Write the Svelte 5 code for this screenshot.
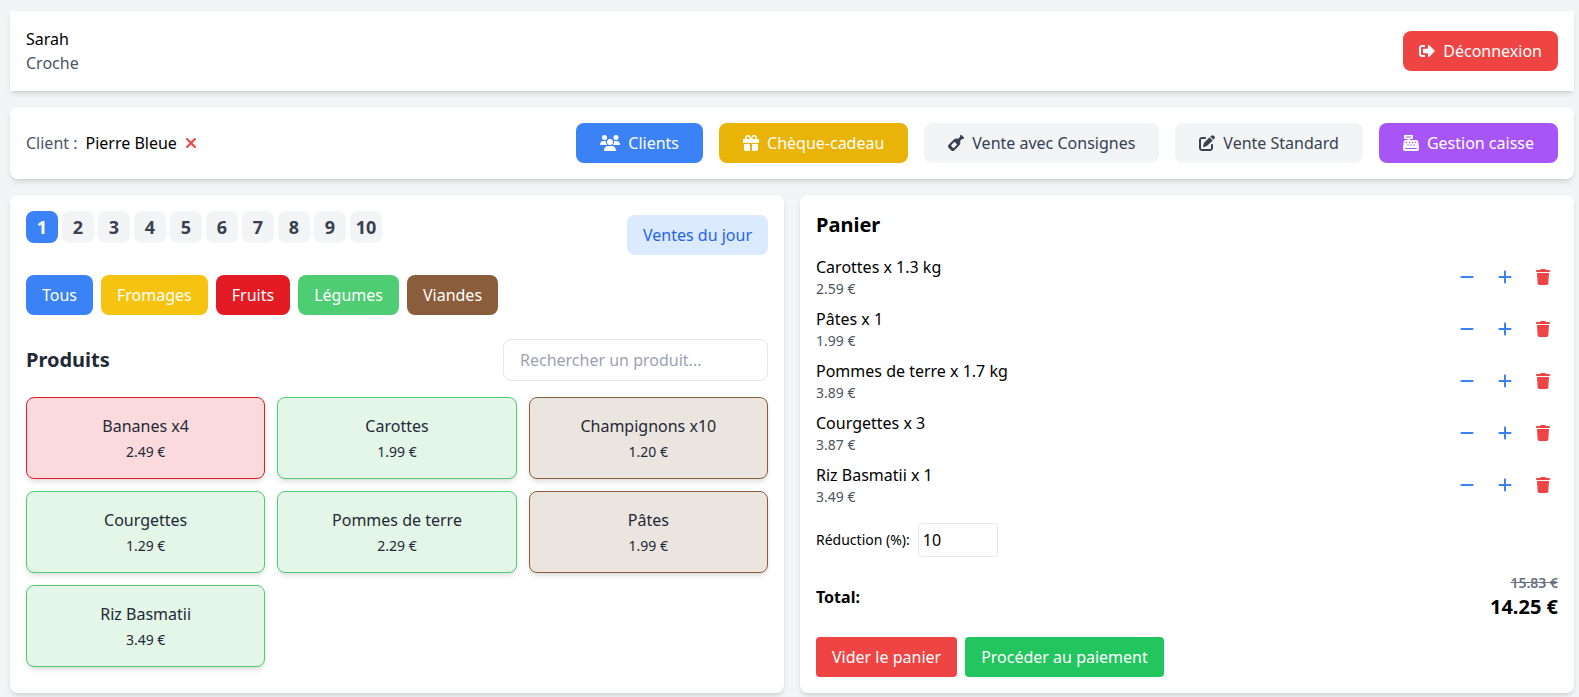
<script>
  const icons = {
    out: [512, 'M497 273L329 441c-15 15-41 4.500-41-17v-96H152c-13.300 0-24-10.700-24-24v-96c0-13.300 10.700-24 24-24h136V88c0-21.400 25.900-32 41-17l168 168c9.300 9.400 9.300 24.600 0 34zM192 436v-40c0-6.600-5.400-12-12-12H96c-17.700 0-32-14.300-32-32V160c0-17.700 14.300-32 32-32h84c6.600 0 12-5.400 12-12V76c0-6.600-5.400-12-12-12H96c-53 0-96 43-96 96v192c0 53 43 96 96 96h84c6.600 0 12-5.400 12-12z'],
    users: [640, 'M144 0a80 80 0 1 1 0 160A80 80 0 1 1 144 0zM512 0a80 80 0 1 1 0 160A80 80 0 1 1 512 0zM0 298.700C0 239.800 47.800 192 106.700 192h42.700c15.900 0 31 3.500 44.600 9.700c-1.300 7.200-1.900 14.700-1.900 22.300c0 38.200 16.800 72.500 43.300 96c-.2 0-.4 0-.7 0H21.300C9.600 320 0 310.400 0 298.700zM405.300 320c-.2 0-.4 0-.7 0c26.600-23.500 43.300-57.800 43.300-96c0-7.600-.7-15-1.900-22.300c13.600-6.300 28.700-9.700 44.600-9.700h42.700C592.200 192 640 239.800 640 298.700c0 11.800-9.600 21.300-21.300 21.300H405.300zM224 224a96 96 0 1 1 192 0 96 96 0 1 1 -192 0zM128 485.300C128 411.700 187.700 352 261.300 352H378.700C452.300 352 512 411.700 512 485.300c0 14.700-11.900 26.700-26.700 26.700H154.700c-14.700 0-26.700-11.900-26.700-26.700z'],
    gift: [512, 'M190.500 68.800L225.300 128H224 152c-22.100 0-40-17.900-40-40s17.900-40 40-40h2.200c14.900 0 28.800 7.900 36.300 20.800zM64 88c0 14.400 3.500 28 9.600 40H32c-17.700 0-32 14.300-32 32v64c0 17.700 14.300 32 32 32H480c17.700 0 32-14.300 32-32V160c0-17.700-14.300-32-32-32H438.400c6.100-12 9.600-25.600 9.600-40c0-48.600-39.400-88-88-88h-2.200c-31.900 0-61.500 16.900-77.700 44.400L256 85.500l-24.100-41C215.700 16.900 186.100 0 154.200 0H152C103.400 0 64 39.400 64 88zm336 0c0 22.100-17.900 40-40 40H288h-1.300l34.800-59.200C329.100 55.900 342.900 48 357.800 48H360c22.100 0 40 17.900 40 40zM32 288V464c0 26.500 21.500 48 48 48H224V288H32zM288 512H432c26.500 0 48-21.500 48-48V288H288V512z'],
    bottle: [512, 'M393.400 9.400c12.500-12.500 32.800-12.500 45.300 0l64 64c12.500 12.500 12.500 32.800 0 45.300c-11.800 11.800-30.700 12.500-43.200 1.900l-9.500 9.500-48.800 48.800c-9.200 9.200-11.500 22.900-8.600 35.600c9.400 40.900-1.900 85.600-33.800 117.500L197.300 493.300c-25 25-65.500 25-90.500 0L18.700 405.200c-25-25-25-65.500 0-90.500L181.200 152.200c31.900-31.900 76.600-43.100 117.500-33.800c12.600 2.900 26.400 .5 35.500-8.600l48.800-48.800 9.500-9.500c-10.600-12.600-10-31.400 1.900-43.200zM99.300 347.300l65.400 65.400c6.200 6.200 16.400 6.200 22.600 0l97.400-97.400c6.200-6.200 6.200-16.400 0-22.600l-65.400-65.400c-6.200-6.200-16.400-6.200-22.600 0L99.300 324.700c-6.200 6.200-6.200 16.400 0 22.600z'],
    pen: [512, 'M471.600 21.700c-21.900-21.900-57.300-21.900-79.200 0L362.300 51.700l97.900 97.900 30.100-30.100c21.900-21.900 21.900-57.300 0-79.200L471.600 21.700zm-299.200 220c-6.100 6.100-10.800 13.600-13.500 21.900l-29.600 88.800c-2.900 8.600-.6 18.100 5.800 24.600s15.900 8.700 24.600 5.800l88.800-29.600c8.200-2.700 15.700-7.400 21.900-13.500L437.700 172.300 339.700 74.300 172.400 241.700zM96 64C43 64 0 107 0 160V416c0 53 43 96 96 96H352c53 0 96-43 96-96V320c0-17.700-14.300-32-32-32s-32 14.300-32 32v96c0 17.700-14.300 32-32 32H96c-17.700 0-32-14.300-32-32V160c0-17.700 14.300-32 32-32h96c17.700 0 32-14.300 32-32s-14.300-32-32-32H96z'],
    register: [512, 'M64 0C46.300 0 32 14.300 32 32V96c0 17.700 14.300 32 32 32h80v32H87c-31.600 0-58.500 23.100-63.300 54.400L1.100 364.100C.4 368.800 0 373.600 0 378.400V448c0 35.300 28.700 64 64 64H448c35.300 0 64-28.700 64-64V378.400c0-4.800-.4-9.600-1.100-14.400L488.200 214.400C483.500 183.100 456.600 160 425 160H208V128h80c17.700 0 32-14.300 32-32V32c0-17.700-14.300-32-32-32H64zM96 48H256c8.800 0 16 7.200 16 16s-7.200 16-16 16H96c-8.800 0-16-7.200-16-16s7.200-16 16-16zM64 432c0-8.800 7.200-16 16-16H432c8.800 0 16 7.200 16 16s-7.200 16-16 16H80c-8.800 0-16-7.200-16-16zm48-168a24 24 0 1 1 0-48 24 24 0 1 1 0 48zm120-24a24 24 0 1 1 -48 0 24 24 0 1 1 48 0zM160 344a24 24 0 1 1 0-48 24 24 0 1 1 0 48zM328 240a24 24 0 1 1 -48 0 24 24 0 1 1 48 0zM256 344a24 24 0 1 1 0-48 24 24 0 1 1 0 48zM424 240a24 24 0 1 1 -48 0 24 24 0 1 1 48 0zM352 344a24 24 0 1 1 0-48 24 24 0 1 1 0 48z'],
    xmark: [384, 'M342.600 150.600c12.500-12.500 12.500-32.800 0-45.300s-32.800-12.500-45.300 0L192 210.700 86.600 105.400c-12.500-12.500-32.800-12.500-45.300 0s-12.500 32.800 0 45.300L146.700 256 41.400 361.400c-12.500 12.500-12.500 32.800 0 45.300s32.800 12.500 45.300 0L192 301.300 297.400 406.600c12.500 12.500 32.800 12.500 45.300 0s12.500-32.800 0-45.300L237.300 256 342.600 150.600z'],
    minus: [448, 'M432 256c0 17.700-14.300 32-32 32L48 288c-17.700 0-32-14.300-32-32s14.300-32 32-32l352 0c17.700 0 32 14.300 32 32z'],
    plus: [448, 'M256 80c0-17.700-14.300-32-32-32s-32 14.300-32 32V224H48c-17.700 0-32 14.300-32 32s14.300 32 32 32H192V432c0 17.700 14.300 32 32 32s32-14.300 32-32V288H400c17.700 0 32-14.300 32-32s-14.300-32-32-32H256V80z'],
    trash: [448, 'M135.200 17.700L128 32H32C14.300 32 0 46.300 0 64S14.300 96 32 96H416c17.700 0 32-14.300 32-32s-14.300-32-32-32H320l-7.200-14.300C307.400 6.800 296.300 0 284.200 0H163.800c-12.100 0-23.200 6.800-28.600 17.700zM416 128H32L53.200 467c1.600 25.300 22.600 45 47.900 45H346.900c25.300 0 46.300-19.700 47.900-45L416 128z']
  };

  const actions = [
    { label: 'Clients', icon: 'users', cls: 'blue' },
    { label: 'Chèque-cadeau', icon: 'gift', cls: 'yellow' },
    { label: 'Vente avec Consignes', icon: 'bottle', cls: 'grey' },
    { label: 'Vente Standard', icon: 'pen', cls: 'grey' },
    { label: 'Gestion caisse', icon: 'register', cls: 'purple' }
  ];

  const pages = [1, 2, 3, 4, 5, 6, 7, 8, 9, 10];

  const categories = [
    { label: 'Tous', cls: 'blue' },
    { label: 'Fromages', cls: 'cheese' },
    { label: 'Fruits', cls: 'fruit' },
    { label: 'Légumes', cls: 'veg' },
    { label: 'Viandes', cls: 'meat' }
  ];

  const products = [
    { name: 'Bananes x4', price: '2.49 €', cls: 'fruit' },
    { name: 'Carottes', price: '1.99 €', cls: 'veg' },
    { name: 'Champignons x10', price: '1.20 €', cls: 'meat' },
    { name: 'Courgettes', price: '1.29 €', cls: 'veg' },
    { name: 'Pommes de terre', price: '2.29 €', cls: 'veg' },
    { name: 'Pâtes', price: '1.99 €', cls: 'meat' },
    { name: 'Riz Basmatii', price: '3.49 €', cls: 'veg' }
  ];

  const cart = [
    { name: 'Carottes x 1.3 kg', price: '2.59 €' },
    { name: 'Pâtes x 1', price: '1.99 €' },
    { name: 'Pommes de terre x 1.7 kg', price: '3.89 €' },
    { name: 'Courgettes x 3', price: '3.87 €' },
    { name: 'Riz Basmatii x 1', price: '3.49 €' }
  ];
</script>

{#snippet icon(name)}
  <svg class="icon" viewBox="0 0 {icons[name][0]} 512" style="width: {icons[name][0] / 32}px" aria-hidden="true">
    <path fill="currentColor" d={icons[name][1]} />
  </svg>
{/snippet}

<div class="page">
  <header class="user card">
    <div>
      <div class="first">Sarah</div>
      <div class="last">Croche</div>
    </div>
    <button class="btn logout">{@render icon('out')}Déconnexion</button>
  </header>

  <section class="toolbar card">
    <span class="client-label">Client :</span>
    <span class="client-name">Pierre Bleue</span>
    <span class="client-clear">{@render icon('xmark')}</span>
    <div class="actions">
      {#each actions as a}
        <button class="btn wide {a.cls}">{@render icon(a.icon)}{a.label}</button>
      {/each}
    </div>
  </section>

  <main class="columns">
    <section class="panel card">
      <div class="top-row">
        <div class="pages">
          {#each pages as p}
            <button class="page-btn" class:active={p === 1}>{p}</button>
          {/each}
        </div>
        <button class="btn today">Ventes du jour</button>
      </div>

      <div class="cats">
        {#each categories as c}
          <button class="btn {c.cls}">{c.label}</button>
        {/each}
      </div>

      <div class="prod-head">
        <h2>Produits</h2>
        <input class="search" type="text" placeholder="Rechercher un produit..." />
      </div>

      <div class="grid">
        {#each products as p}
          <div class="product {p.cls}">
            <div class="name">{p.name}</div>
            <div class="price">{p.price}</div>
          </div>
        {/each}
      </div>
    </section>

    <section class="panel card">
      <h2 class="cart-title">Panier</h2>
      <ul class="cart">
        {#each cart as item}
          <li>
            <div>
              <div class="item-name">{item.name}</div>
              <div class="item-price">{item.price}</div>
            </div>
            <div class="item-actions">
              <button class="tool">{@render icon('minus')}</button>
              <button class="tool">{@render icon('plus')}</button>
              <button class="tool del">{@render icon('trash')}</button>
            </div>
          </li>
        {/each}
      </ul>

      <div class="discount">
        <label for="reduction">Réduction (%):</label>
        <input id="reduction" type="text" value="10" />
      </div>

      <div class="total">
        <span class="total-label">Total:</span>
        <div class="amounts">
          <div class="old">15.83 €</div>
          <div class="new">14.25 €</div>
        </div>
      </div>

      <div class="cart-buttons">
        <button class="btn small-r clear">Vider le panier</button>
        <button class="btn small-r pay">Procéder au paiement</button>
      </div>
    </section>
  </main>
</div>

<style>
  :global(body) {
    background: #f3f4f6;
    overflow: hidden;
  }
  .page {
    padding: 11px 5px 4px 10px;
    font-family: "Noto Sans", sans-serif;
    font-size: 16px;
    line-height: 24px;
    color: #000;
  }
  .card {
    background: #fff;
    border-radius: 8px;
    box-shadow: 0 4px 6px -1px rgba(0,0,0,0.1), 0 2px 4px -2px rgba(0,0,0,0.1);
    padding: 16px;
  }
  button {
    font: inherit;
    border: 0;
    cursor: pointer;
  }
  .icon {
    height: 16px;
    flex: none;
    display: block;
  }
  .btn {
    display: inline-flex;
    align-items: center;
    gap: 8px;
    height: 40px;
    padding: 0 16px;
    border-radius: 8px;
    color: #fff;
  }
  .wide { padding: 0 24px; }
  .blue { background: #3b82f6; }
  .yellow { background: #eab308; }
  .purple { background: #a855f7; }
  .grey { background: #f3f4f6; color: #374151; }
  .btn.cheese { background: #f6c310; }
  .btn.fruit { background: #e21b25; }
  .btn.veg { background: #4ecd72; }
  .btn.meat { background: #8a5e3c; }

  .user {
    display: flex;
    justify-content: space-between;
    align-items: center;
    border-radius: 0;
    margin-bottom: 16px;
  }
  .last { color: #4b5563; }
  .logout { background: #ef4444; }

  .toolbar {
    display: flex;
    align-items: center;
    margin-bottom: 16px;
  }
  .client-label { color: #4b5563; margin-right: 8px; }
  .client-clear { color: #ef4444; margin-left: 8px; }
  .actions {
    display: flex;
    gap: 16px;
    margin-left: auto;
  }

  .columns {
    display: grid;
    grid-template-columns: 1fr 1fr;
    gap: 16px;
  }

  .top-row {
    display: flex;
    justify-content: space-between;
    align-items: center;
    margin-bottom: 16px;
  }
  .pages {
    display: flex;
    gap: 4px;
    margin-bottom: 16px;
  }
  .page-btn {
    width: 32px;
    height: 32px;
    padding: 0;
    border-radius: 8px;
    background: #f3f4f6;
    color: #374151;
    font-size: 18px;
    font-weight: 700;
  }
  .page-btn.active { background: #3b82f6; color: #fff; }
  .today { background: #dbeafe; color: #2563eb; }

  .cats {
    display: flex;
    gap: 8px;
    margin-bottom: 24px;
  }

  .prod-head {
    display: flex;
    justify-content: space-between;
    align-items: center;
    margin-bottom: 16px;
  }
  h2 {
    margin: 0;
    font-size: 20px;
    line-height: 28px;
    font-weight: 700;
  }
  .prod-head h2 { color: #1f2937; }
  .search {
    box-sizing: border-box;
    width: 265px;
    height: 42px;
    padding: 8px 16px;
    border: 1px solid #e5e7eb;
    border-radius: 8px;
    font: inherit;
    outline: none;
  }
  .search::placeholder { color: #9ca3af; opacity: 1; }

  .grid {
    display: grid;
    grid-template-columns: repeat(3, 1fr);
    gap: 12px;
  }
  .product {
    box-sizing: border-box;
    height: 82px;
    padding: 16px;
    border: 1px solid;
    border-radius: 8px;
    text-align: center;
    color: #1f2937;
    box-shadow: 0 4px 6px -1px rgba(0,0,0,0.1), 0 2px 4px -2px rgba(0,0,0,0.1);
  }
  .product.fruit { background: #fbdadd; border-color: #e21b25; }
  .product.veg { background: #e4f6e8; border-color: #4ecd72; }
  .product.meat { background: #ebe5df; border-color: #8a5e3c; }
  .name { margin-bottom: 4px; }
  .price { font-size: 14px; line-height: 20px; }

  .cart-title { margin-bottom: 16px; }
  .cart {
    list-style: none;
    margin: 0 0 16px;
    padding: 0;
    display: flex;
    flex-direction: column;
    gap: 8px;
  }
  .cart li {
    display: flex;
    justify-content: space-between;
    align-items: center;
  }
  .item-price {
    font-size: 14px;
    line-height: 20px;
    color: #4b5563;
  }
  .item-actions {
    display: flex;
    gap: 8px;
  }
  .tool {
    padding: 8px;
    background: none;
    color: #3b82f6;
  }
  .tool.del { color: #ef4444; }

  .discount {
    display: flex;
    align-items: center;
    gap: 8px;
    margin-bottom: 16px;
  }
  .discount label { font-size: 14px; }
  .discount input {
    box-sizing: border-box;
    width: 80px;
    height: 34px;
    padding: 4px;
    border: 1px solid #e5e7eb;
    border-radius: 4px;
    font: inherit;
    outline: none;
  }

  .total {
    display: flex;
    justify-content: space-between;
    align-items: center;
    margin-bottom: 16px;
  }
  .total-label { font-size: 16px; font-weight: 700; }
  .amounts { text-align: right; }
  .old {
    font-size: 14px;
    line-height: 20px;
    font-weight: 600;
    color: #6b7280;
    text-decoration: line-through;
  }
  .new {
    font-size: 20px;
    line-height: 28px;
    font-weight: 700;
  }

  .cart-buttons {
    display: flex;
    gap: 8px;
  }
  .small-r { border-radius: 4px; }
  .clear { background: #ef4444; }
  .pay { background: #22c55e; }
</style>
